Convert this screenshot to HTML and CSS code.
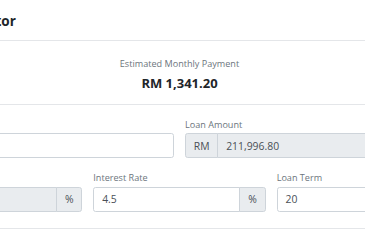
FILE: index.html
```html
<!DOCTYPE html>
<html lang="en">
<head>
<meta charset="utf-8">
<title>Loan Calculator</title>
<link rel="stylesheet" href="styles.css">
</head>
<body>
<div class="card">
  <div class="card-header">
    <h5 class="card-title">Loan Calculator</h5>
  </div>
  <div class="summary">
    <div class="summary-label">Estimated Monthly Payment</div>
    <div class="summary-value">RM 1,341.20</div>
  </div>
  <div class="form">
    <div class="row row-two">
      <div class="field">
        <label class="label">Property Price</label>
        <div class="group">
          <input class="control" type="text" value="235,552">
        </div>
      </div>
      <div class="field">
        <label class="label">Loan Amount</label>
        <div class="group">
          <span class="addon addon-left">RM</span>
          <input class="control control-readonly control-after" type="text" value="211,996.80" readonly>
        </div>
      </div>
    </div>
    <div class="row row-three">
      <div class="field">
        <label class="label">Down Payment</label>
        <div class="group">
          <input class="control control-readonly control-before" type="text" value="10" readonly>
          <span class="addon addon-right">%</span>
        </div>
      </div>
      <div class="field">
        <label class="label">Interest Rate</label>
        <div class="group">
          <input class="control control-before" type="text" value="4.5">
          <span class="addon addon-right">%</span>
        </div>
      </div>
      <div class="field">
        <label class="label">Loan Term</label>
        <div class="group">
          <input class="control control-before" type="text" value="20">
          <span class="addon addon-right">years</span>
        </div>
      </div>
    </div>
  </div>
</div>
</body>
</html>
```

FILE: styles.css
```css
html, body {
  margin: 0;
  padding: 0;
  overflow: hidden;
  background: #ffffff;
}

body {
  font-family: "Open Sans", "Noto Sans", sans-serif;
  color: #212529;
}

.card {
  width: 565px;
  margin-left: -103px;
  background: #ffffff;
}

.card-header {
  padding: 13px 13px 10px;
  border-bottom: 1px solid #e4e6e9;
}

.card-title {
  margin: 0;
  font-size: 13.5px;
  line-height: 17px;
  font-weight: 700;
  color: #212529;
}

.summary {
  padding: 15.6px 13px 11.6px;
  text-align: center;
  border-bottom: 1px solid #e4e6e9;
}

.summary-label {
  font-size: 9.1px;
  line-height: 13.65px;
  color: #6c757d;
}

.summary-value {
  margin-top: 6.2px;
  font-size: 13px;
  line-height: 15.6px;
  font-weight: 700;
  color: #212529;
}

.form {
  padding: 13px 13px 16px;
  border-bottom: 1px solid #e4e6e9;
}

.row {
  display: grid;
  column-gap: 11px;
}

.row-two {
  grid-template-columns: repeat(2, minmax(0, 1fr));
  margin-bottom: 13px;
}

.row-three {
  grid-template-columns: repeat(3, minmax(0, 1fr));
}

.field {
  min-width: 0;
}

.label {
  display: block;
  font-size: 9.1px;
  line-height: 13.65px;
  color: #6c757d;
  margin-bottom: 2px;
}

.group {
  display: flex;
  height: 25px;
}

.control {
  flex: 1 1 0;
  width: 0;
  min-width: 0;
  height: 25px;
  box-sizing: border-box;
  margin: 0;
  padding: 0 7.8px;
  font-family: inherit;
  font-size: 10.4px;
  color: #495057;
  background: #ffffff;
  border: 1px solid #ced4da;
  border-radius: 2.6px;
  outline: none;
}

.control-readonly {
  background: #e9ecef;
}

.control-before {
  border-top-right-radius: 0;
  border-bottom-right-radius: 0;
}

.control-after {
  margin-left: -1px;
  border-top-left-radius: 0;
  border-bottom-left-radius: 0;
}

.addon {
  display: flex;
  align-items: center;
  flex: 0 0 auto;
  box-sizing: border-box;
  height: 25px;
  padding: 0 7.8px;
  font-size: 10.4px;
  color: #495057;
  background: #e9ecef;
  border: 1px solid #ced4da;
}

.addon-left {
  border-radius: 2.6px 0 0 2.6px;
}

.addon-right {
  margin-left: -1px;
  border-radius: 0 2.6px 2.6px 0;
}
```
